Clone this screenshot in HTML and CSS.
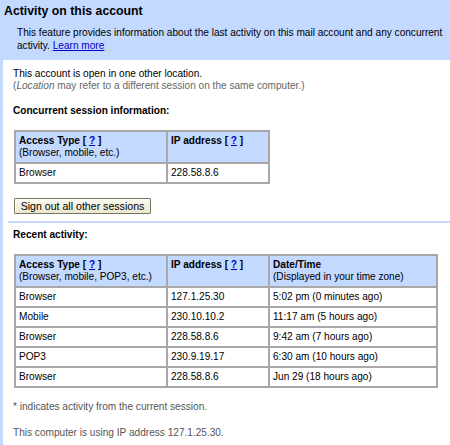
FILE: index.html
```html
<!DOCTYPE html>
<html>
<head>
<meta charset="utf-8">
<title>Activity on this account</title>
<link rel="stylesheet" href="styles.css">
</head>
<body>
<div class="header">
  <h1 class="title">Activity on this account</h1>
  <p class="desc"><span>This feature provides information about the last activity on this mail account and any concurrent</span><br><span>activity.</span> <a href="#" class="link">Learn more</a></p>
</div>
<div class="content">
  <p class="line">This account is open in one other location.</p>
  <p class="line muted">(<i>Location</i> may refer to a different session on the same computer.)</p>
  <h2 class="section">Concurrent session information:</h2>
  <table class="grid grid-small">
    <colgroup><col class="c1"><col class="c2"></colgroup>
    <tr>
      <th><b>Access Type [ <a href="#" class="link">?</a> ]</b><br>(Browser, mobile, etc.)</th>
      <th><b>IP address [ <a href="#" class="link">?</a> ]</b></th>
    </tr>
    <tr><td>Browser</td><td>228.58.8.6</td></tr>
  </table>
  <button class="btn">Sign out all other sessions</button>
  <div class="sep"></div>
  <h2 class="section section-recent">Recent activity:</h2>
  <table class="grid grid-large">
    <colgroup><col class="c1"><col class="c2"><col class="c3"></colgroup>
    <tr>
      <th><b>Access Type [ <a href="#" class="link">?</a> ]</b><br>(Browser, mobile, POP3, etc.)</th>
      <th><b>IP address [ <a href="#" class="link">?</a> ]</b></th>
      <th><b>Date/Time</b><br>(Displayed in your time zone)</th>
    </tr>
    <tr><td>Browser</td><td>127.1.25.30</td><td>5:02 pm (0 minutes ago)</td></tr>
    <tr><td>Mobile</td><td>230.10.10.2</td><td>11:17 am (5 hours ago)</td></tr>
    <tr><td>Browser</td><td>228.58.8.6</td><td>9:42 am (7 hours ago)</td></tr>
    <tr><td>POP3</td><td>230.9.19.17</td><td>6:30 am (10 hours ago)</td></tr>
    <tr><td>Browser</td><td>228.58.8.6</td><td>Jun 29 (18 hours ago)</td></tr>
  </table>
  <p class="note">* indicates activity from the current session.</p>
  <p class="note note-ip">This computer is using IP address 127.1.25.30.</p>
</div>
</body>
</html>
```
FILE: styles.css
```css
html, body {
  margin: 0;
  padding: 0;
}
body {
  background: #c3d9ff;
  font-family: "Liberation Sans", Arial, sans-serif;
  font-size: 10.1px;
  color: #000;
  height: 445px;
  overflow: hidden;
  display: flex;
  flex-direction: column;
}
.header {
  padding: 4px 0 8px 4px;
}
.title {
  margin: 0;
  font-size: 12.3px;
  line-height: 14px;
  font-weight: bold;
}
.desc {
  margin: 8px 0 0 13px;
  line-height: 13px;
  white-space: nowrap;
}
.link {
  color: #0000cc;
  text-decoration: underline;
}
.content {
  flex: 1;
  margin-left: 3px;
  background: #fff;
  padding: 8px 0 0 10px;
}
.line {
  margin: 0;
  line-height: 12px;
}
.muted {
  color: #666;
}
.section {
  margin: 13px 0 0 0;
  font-size: 10.1px;
  line-height: 12px;
  font-weight: bold;
}
.section-recent {
  margin-top: 6px;
}
.grid {
  margin: 13px 0 0 1px;
  border-collapse: collapse;
  table-layout: fixed;
  border: 2px solid #a8a8a8;
}
.grid th, .grid td {
  border: 2px solid #a8a8a8;
  padding: 3px 4px 3px 3px;
  line-height: 12px;
  text-align: left;
  vertical-align: top;
  font-weight: normal;
}
.grid th {
  background: #c3d9ff;
}
.grid-small { width: 254px; }
.grid-large { width: 424px; }
.c1 { width: 152px; }
.c2 { width: 102px; }
.btn {
  display: block;
  margin: 14px 0 0 1px;
  width: 137px;
  height: 16px;
  padding: 0;
  font-family: "Liberation Sans", Arial, sans-serif;
  font-size: 10.6px;
  color: #000;
  background: linear-gradient(#fbfaf1, #ebe8cf);
  border: 1px solid #757562;
  border-radius: 1px;
  box-shadow: inset 1px 1px 0 #fff;
}
.sep {
  margin: 7px 0 0 -5px;
  height: 2px;
  background: #c3d9ff;
}
.note {
  margin: 13px 0 0 0;
  line-height: 12px;
  color: #555;
}
.note-ip {
  margin-top: 14px;
}
```
